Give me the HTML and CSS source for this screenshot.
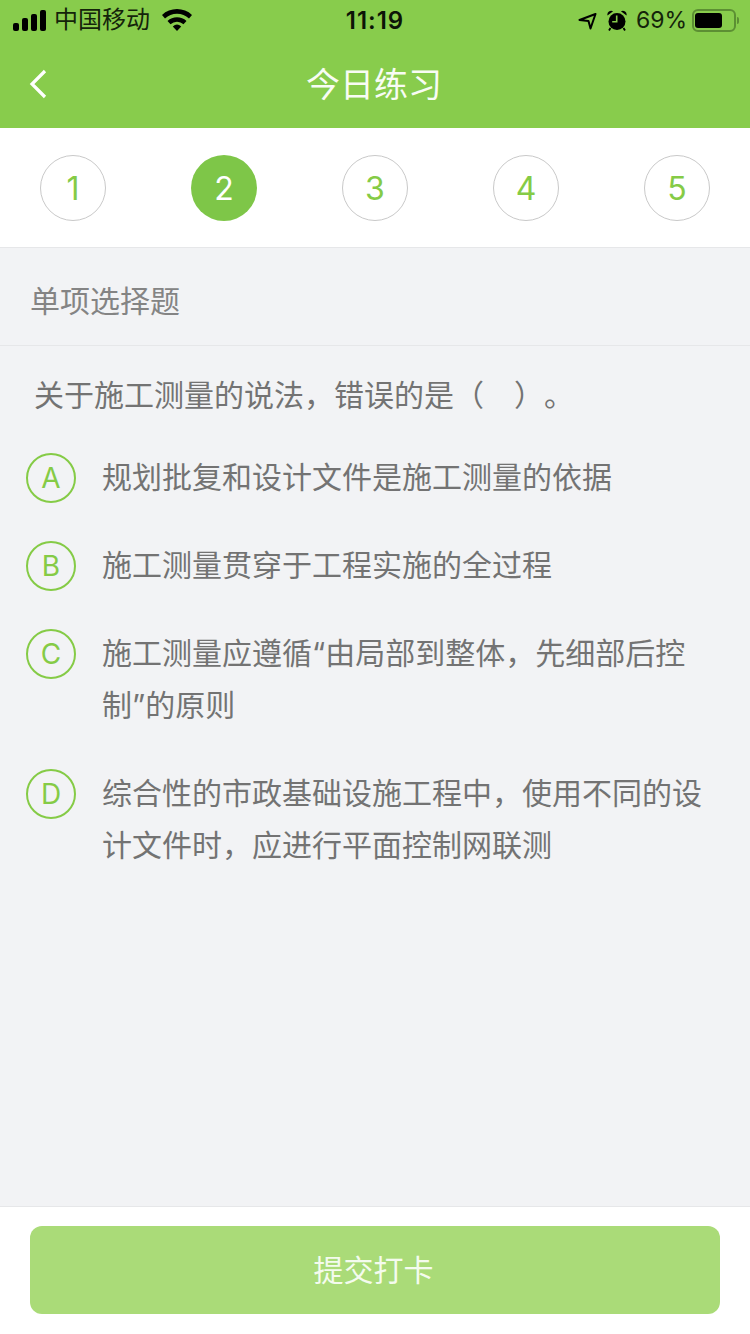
FILE: index.html
```html
<!DOCTYPE html>
<html lang="zh-CN">
<head>
    <meta charset="UTF-8">
    <title>今日练习</title>
    <link rel="stylesheet" href="styles.css">
</head>
<body>
    <div class="page">
        <div class="header">
            <div class="statusbar">
                <div class="status-left">
                    <svg class="signal" width="33" height="21" viewBox="0 0 33 21"><rect x="0" y="13" width="6" height="8" rx="2"/><rect x="9" y="8" width="6" height="13" rx="2"/><rect x="18" y="4" width="6" height="17" rx="2"/><rect x="27" y="0" width="6" height="21" rx="2"/></svg>
                    <span class="carrier">中国移动</span>
                    <svg class="wifi" width="30" height="22" viewBox="0 0 30 22"><path d="M0 6A22 22 0 0 1 30 6L27 9.5A17.5 17.5 0 0 0 3 9.5Z"/><path d="M5.5 12A14 14 0 0 1 24.5 12L21.5 15.3A9.5 9.5 0 0 0 8.5 15.3Z"/><path d="M10.8 17.4A6.5 6.5 0 0 1 19.2 17.4L15 22Z"/></svg>
                </div>
                <div class="status-time">11:19</div>
                <div class="status-right">
                    <svg class="location" width="19" height="17" viewBox="0 0 19 17"><path d="M17.5 1 1.5 7l9 1 2 7.5Z" fill="none" stroke="#000" stroke-width="2" stroke-linejoin="round"/></svg>
                    <svg class="alarm" width="20" height="21" viewBox="0 0 20 21"><circle cx="10" cy="11.5" r="8.5"/><path d="M.5 5.5a3.8 3.8 0 0 1 5.6-4.2ZM19.5 5.5a3.8 3.8 0 0 0-5.6-4.2Z"/><path d="M3.5 18 2 20.5M16.5 18l1.5 2.5" stroke="#000" stroke-width="1.8"/><path d="M9.7 5.5v6.3H5.2" fill="none" stroke="#88cc4c" stroke-width="1.6"/></svg>
                    <span class="percent">69%</span>
                    <div class="battery"><div class="battery-level"></div></div>
                    <div class="battery-cap"></div>
                </div>
            </div>
            <div class="navbar">
                <svg class="back" width="20" height="32" viewBox="0 0 20 32"><path d="M17 3 4 16l13 13" fill="none" stroke="#fff" stroke-width="3.2"/></svg>
                <h1 class="title">今日练习</h1>
            </div>
        </div>

        <div class="steps">
            <div class="step">1</div>
            <div class="step active">2</div>
            <div class="step">3</div>
            <div class="step">4</div>
            <div class="step">5</div>
        </div>

        <div class="content">
            <div class="qtype">单项选择题</div>
            <div class="question">关于施工测量的说法，错误的是（　）。</div>
            <div class="options">
                <div class="option"><div class="letter">A</div><div class="option-text">规划批复和设计文件是施工测量的依据</div></div>
                <div class="option"><div class="letter">B</div><div class="option-text">施工测量贯穿于工程实施的全过程</div></div>
                <div class="option"><div class="letter">C</div><div class="option-text">施工测量应遵循“由局部到整体，先细部后控制”的原则</div></div>
                <div class="option"><div class="letter">D</div><div class="option-text">综合性的市政基础设施工程中，使用不同的设计文件时，应进行平面控制网联测</div></div>
            </div>
        </div>

        <div class="footer">
            <button class="submit">提交打卡</button>
        </div>
    </div>
</body>
</html>
```

FILE: styles.css
```css
* {
    box-sizing: border-box;
}

body {
    margin: 0;
    font-family: "Liberation Sans", "Noto Sans CJK SC", sans-serif;
}

.page {
    width: 750px;
    height: 1334px;
    display: flex;
    flex-direction: column;
    background: #f2f3f5;
    overflow: hidden;
}

.header {
    height: 128px;
    background: #88cc4c;
}

.statusbar {
    height: 40px;
    padding: 0 11px 0 13px;
    display: flex;
    align-items: center;
    position: relative;
    color: #000;
}

.status-left {
    display: flex;
    align-items: center;
}

.carrier {
    margin-left: 8px;
    font-size: 24px;
    line-height: 30px;
    color: #14240a;
}

.wifi {
    margin-left: 12px;
}

.status-time {
    position: absolute;
    left: 0;
    right: 0;
    text-align: center;
    font-family: Inter, "Liberation Sans", sans-serif;
    font-size: 24px;
    font-weight: 600;
    letter-spacing: 1px;
    color: #0c1407;
}

.status-right {
    margin-left: auto;
    display: flex;
    align-items: center;
}

.location {
    margin: 2px 10px 0 0;
}

.alarm {
    margin-right: 9px;
}

.percent {
    font-family: Inter, "Liberation Sans", sans-serif;
    font-size: 23px;
    color: #14240a;
    margin-right: 5px;
}

.battery {
    width: 44px;
    height: 23px;
    padding: 2px 1px;
    border: 2px solid #5c8f33;
    border-radius: 6px;
}

.battery-level {
    width: 27px;
    height: 100%;
    background: #000;
    border-radius: 3px;
}

.battery-cap {
    width: 2px;
    height: 7px;
    margin-left: 1px;
    background: #5c8f33;
    border-radius: 0 2px 2px 0;
}

.navbar {
    height: 88px;
    display: flex;
    align-items: center;
    justify-content: center;
    position: relative;
}

.back {
    position: absolute;
    left: 28px;
    top: 0;
    bottom: 0;
    margin: auto 0;
}

.title {
    margin: 0 2px 4px 0;
    font-size: 34px;
    font-weight: 400;
    color: #f8fcf4;
}

.steps {
    height: 120px;
    padding: 27px 40px 0;
    display: flex;
    justify-content: space-between;
    align-items: flex-start;
    background: #fff;
    border-bottom: 1px solid #e6e7e9;
}

.step {
    width: 66px;
    height: 66px;
    display: flex;
    align-items: center;
    justify-content: center;
    border: 1px solid #c9c9c9;
    border-radius: 50%;
    font-family: Inter, "Liberation Sans", sans-serif;
    font-size: 32px;
    font-weight: 400;
    color: #85cb46;
}

.step.active {
    border: none;
    background: #7ec648;
    color: #fff;
}

.content {
    flex: 1;
}

.qtype {
    height: 98px;
    padding: 4px 0 0 30px;
    display: flex;
    align-items: center;
    border-bottom: 1px solid #e6e7e9;
    font-size: 30px;
    color: #848484;
}

.question {
    margin-top: 29px;
    padding-left: 34px;
    font-size: 30px;
    line-height: 42px;
    color: #737373;
    text-spacing-trim: space-all;
}

.options {
    margin-top: 35px;
    padding: 0 36px 0 26px;
    display: flex;
    flex-direction: column;
    gap: 37px;
}

.option {
    display: flex;
    align-items: flex-start;
}

.letter {
    flex: none;
    width: 50px;
    height: 50px;
    margin-top: 1px;
    display: flex;
    align-items: center;
    justify-content: center;
    border: 2px solid #85cb46;
    border-radius: 50%;
    font-family: Inter, "Liberation Sans", sans-serif;
    font-size: 28px;
    font-weight: 400;
    color: #85cb46;
}

.option-text {
    margin: -1px 0 0 26px;
    font-family: Inter, "Noto Sans CJK SC", sans-serif;
    font-size: 30px;
    line-height: 52px;
    color: #737373;
}

.footer {
    height: 128px;
    padding: 19px 30px 0;
    background: #fff;
    border-top: 1px solid #e6e7e9;
}

.submit {
    display: block;
    width: 100%;
    height: 88px;
    padding: 0 3px 5px 0;
    border: none;
    border-radius: 12px;
    background: #aadb78;
    font-family: inherit;
    font-size: 30px;
    color: #f4fbee;
}
```
